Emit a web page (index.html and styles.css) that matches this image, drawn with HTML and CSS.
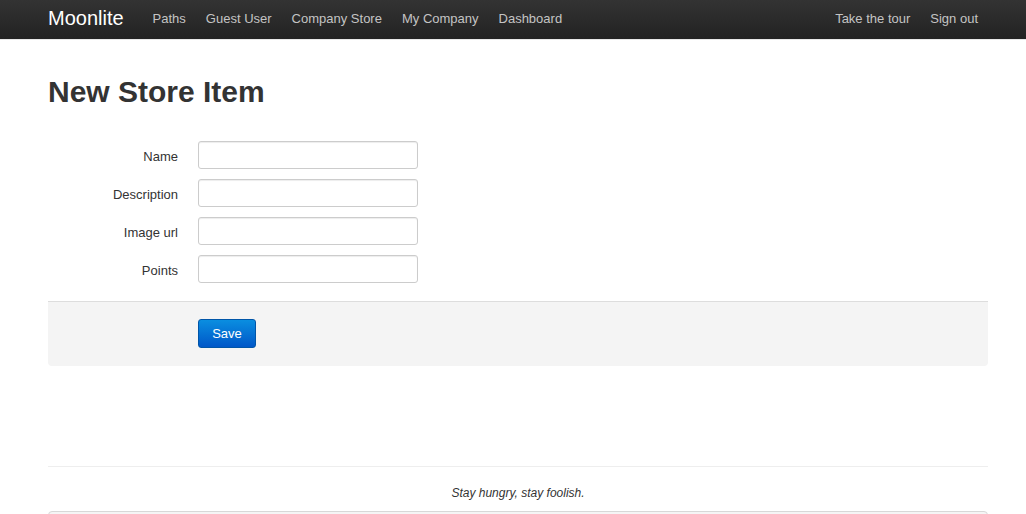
FILE: index.html
```html
<!DOCTYPE html>
<html>
<head>
<meta charset="utf-8">
<link rel="stylesheet" href="styles.css">
</head>
<body>
<div class="navbar">
  <div class="container nav-inner">
    <a class="brand">Moonlite</a>
    <ul class="nav">
      <li>Paths</li>
      <li>Guest User</li>
      <li>Company Store</li>
      <li>My Company</li>
      <li>Dashboard</li>
    </ul>
    <ul class="nav nav-right">
      <li>Take the tour</li>
      <li>Sign out</li>
    </ul>
  </div>
</div>
<div class="container main">
  <h1>New Store Item</h1>
  <form class="form">
    <div class="row"><label>Name</label><input type="text"></div>
    <div class="row"><label>Description</label><input type="text"></div>
    <div class="row"><label>Image url</label><input type="text"></div>
    <div class="row"><label>Points</label><input type="text"></div>
    <div class="actions"><button type="button" class="btn">Save</button></div>
  </form>
  <footer class="footer">
    <p>Stay hungry, stay foolish.</p>
    <div class="well"></div>
  </footer>
</div>
</body>
</html>
```
FILE: styles.css
```css
html, body { margin: 0; padding: 0; }
body {
  font-family: "Liberation Sans", Arial, sans-serif;
  font-size: 13px;
  color: #333;
  background: #fff;
  overflow: hidden;
}
.container {
  width: 940px;
  margin: 0 auto;
  padding-left: 10px;
}
.navbar {
  height: 39px;
  background: linear-gradient(#333333, #222222);
  border-bottom: 1px solid #e8e8e8;
}
.nav-inner {
  display: flex;
  align-items: center;
  height: 39px;
}
.brand {
  font-size: 20px;
  color: #fff;
  margin-right: 19px;
  margin-top: -2px;
}
.nav {
  display: flex;
  list-style: none;
  margin: 0;
  padding: 0;
}
.nav li {
  font-size: 13px;
  color: #c4c4c4;
  padding: 0 10px;
  margin-top: -2px;
}
.nav-right { margin-left: auto; }
h1 {
  font-size: 30px;
  font-weight: bold;
  color: #333;
  margin: 0;
  padding-top: 34px;
  line-height: 36px;
  height: 36px;
}
.form { margin-top: 31px; }
.row {
  display: flex;
  align-items: center;
  margin-bottom: 10px;
}
.row label {
  width: 130px;
  text-align: right;
  margin-right: 20px;
  padding-top: 2px;
  color: #333;
}
.row input {
  width: 220px;
  height: 28px;
  box-sizing: border-box;
  border: 1px solid #cccccc;
  border-radius: 3px;
  box-shadow: inset 0 1px 1px rgba(0,0,0,0.075);
  padding: 4px;
  margin: 0;
  font-family: inherit;
  font-size: 13px;
}
.actions {
  margin-top: 18px;
  background: #f4f4f4;
  border-top: 1px solid #dddddd;
  border-radius: 0 0 4px 4px;
  padding: 17px 0 19px 150px;
  height: 28px;
}
.btn {
  width: 58px;
  height: 29px;
  border: 1px solid #0055a8;
  border-radius: 3px;
  background: linear-gradient(#0a8ee0, #0057c8);
  color: #fff;
  font-family: inherit;
  font-size: 13px;
  padding: 0;
}
.footer {
  margin-top: 100px;
  border-top: 1px solid #eeeeee;
}
.footer p {
  text-align: center;
  font-style: italic;
  font-size: 12px;
  color: #333;
  margin: 19px 0 11px;
  line-height: 14px;
}
.well {
  height: 20px;
  background: #f5f5f5;
  border: 1px solid #d8d8d8;
  border-radius: 4px;
}
```
